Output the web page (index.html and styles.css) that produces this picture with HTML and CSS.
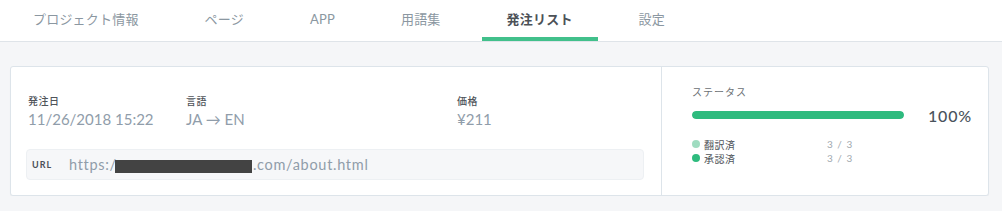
FILE: index.html
```html
<!DOCTYPE html>
<html lang="ja">
<head>
<meta charset="utf-8">
<title>発注リスト</title>
<link rel="stylesheet" href="styles.css">
</head>
<body>
<nav class="tabs">
  <a class="tab">プロジェクト情報</a>
  <a class="tab">ページ</a>
  <a class="tab">APP</a>
  <a class="tab">用語集</a>
  <a class="tab active">発注リスト</a>
  <a class="tab">設定</a>
</nav>
<main class="main">
  <section class="card">
    <div class="info">
      <div class="fields">
        <div class="field f1">
          <div class="label">発注日</div>
          <div class="value">11/26/2018 15:22</div>
        </div>
        <div class="field f2">
          <div class="label">言語</div>
          <div class="value">JA → EN</div>
        </div>
        <div class="field f3">
          <div class="label">価格</div>
          <div class="value">¥211</div>
        </div>
      </div>
      <div class="url-box">
        <span class="url-label">URL</span>
        <span class="url-text">https:/<span class="redact"></span>.com/about.html</span>
      </div>
    </div>
    <div class="status">
      <div class="status-label">ステータス</div>
      <div class="progress-row">
        <div class="bar"><div class="bar-fill" style="width:100%"></div></div>
        <div class="percent">100%</div>
      </div>
      <ul class="legend">
        <li class="legend-row"><span class="dot light"></span><span class="legend-name">翻訳済</span><span class="legend-count">3 / 3</span></li>
        <li class="legend-row"><span class="dot"></span><span class="legend-name">承認済</span><span class="legend-count">3 / 3</span></li>
      </ul>
    </div>
  </section>
</main>
</body>
</html>
```
FILE: styles.css
```css
* { box-sizing: border-box; }
html, body { margin: 0; padding: 0; }
body {
  background: #f5f6f8;
  font-family: Lato, "Noto Sans CJK JP", sans-serif;
  color: #4a5058;
}
.tabs {
  display: flex;
  gap: 16px;
  padding-left: 8px;
  height: 42px;
  background: #fff;
  border-bottom: 1px solid #dfe4e9;
}
.tab {
  display: flex;
  align-items: center;
  height: 41px;
  padding: 0 25px;
  border-bottom: 4px solid transparent;
  font-size: 13px;
  letter-spacing: 0.2px;
  color: #8b97a1;
  cursor: pointer;
}
.tab.active {
  border-bottom-color: #41c08b;
  color: #4c5157;
  font-weight: 700;
}
.main {
  padding: 24px 13px 0 10px;
}
.card {
  display: flex;
  background: #fff;
  border: 1px solid #dde4ea;
  border-radius: 3px;
  box-shadow: 0 1px 1px rgba(0,0,0,0.04);
}
.info {
  width: 651px;
  border-right: 1px solid #dde4ea;
  padding: 26px 17px 15px 15px;
}
.fields {
  display: flex;
  padding-left: 2px;
}
.f1 { width: 158px; }
.f2 { width: 271px; }
.f3 { flex: 1; }
.label {
  font-size: 10px;
  line-height: 16px;
  letter-spacing: 0.5px;
  color: #4f545a;
  font-weight: 500;
}
.value {
  font-size: 15px;
  line-height: 20px;
  color: #909daa;
  letter-spacing: 0;
}
.url-box {
  display: flex;
  align-items: center;
  margin-top: 20px;
  height: 31px;
  background: #f6f7f9;
  border: 1px solid #edf0f3;
  border-radius: 4px;
  padding-left: 5px;
}
.url-label {
  width: 37px;
  font-size: 9px;
  font-weight: 700;
  letter-spacing: 1px;
  color: #4a5058;
}
.url-text {
  display: flex;
  align-items: center;
  font-size: 14.5px;
  color: #909daa;
  letter-spacing: 0.7px;
}
.redact {
  display: inline-block;
  width: 137px;
  height: 13px;
  margin-top: 3px;
  background: #434343;
  margin-left: -2px;
  margin-right: 1px;
}
.status {
  flex: 1;
  padding: 17px 15px 0 30px;
}
.status-label {
  font-size: 10px;
  line-height: 16px;
  letter-spacing: 1px;
  color: #6b6f74;
}
.progress-row {
  display: flex;
  align-items: center;
  height: 20px;
  margin-top: 5px;
}
.bar {
  width: 212px;
  height: 8px;
  border-radius: 4px;
  background: #e8ecef;
  overflow: hidden;
}
.bar-fill {
  height: 100%;
  background: #2ebb7e;
  border-radius: 4px;
}
.percent {
  margin-left: 24px;
  font-size: 16px;
  font-weight: 500;
  letter-spacing: 0.8px;
  color: #4a535c;
}
.legend {
  list-style: none;
  margin: 12px 0 0;
  padding: 0;
}
.legend-row {
  display: flex;
  align-items: center;
  height: 14px;
}
.dot {
  width: 8px;
  height: 8px;
  border-radius: 50%;
  background: #2ebb7e;
  margin-right: 4px;
}
.dot.light { background: #9fdcc0; }
.legend-name {
  width: 123px;
  font-size: 10px;
  letter-spacing: 0.5px;
  color: #4f545a;
}
.legend-count {
  font-size: 10px;
  letter-spacing: 1px;
  color: #a2a9af;
}
```
